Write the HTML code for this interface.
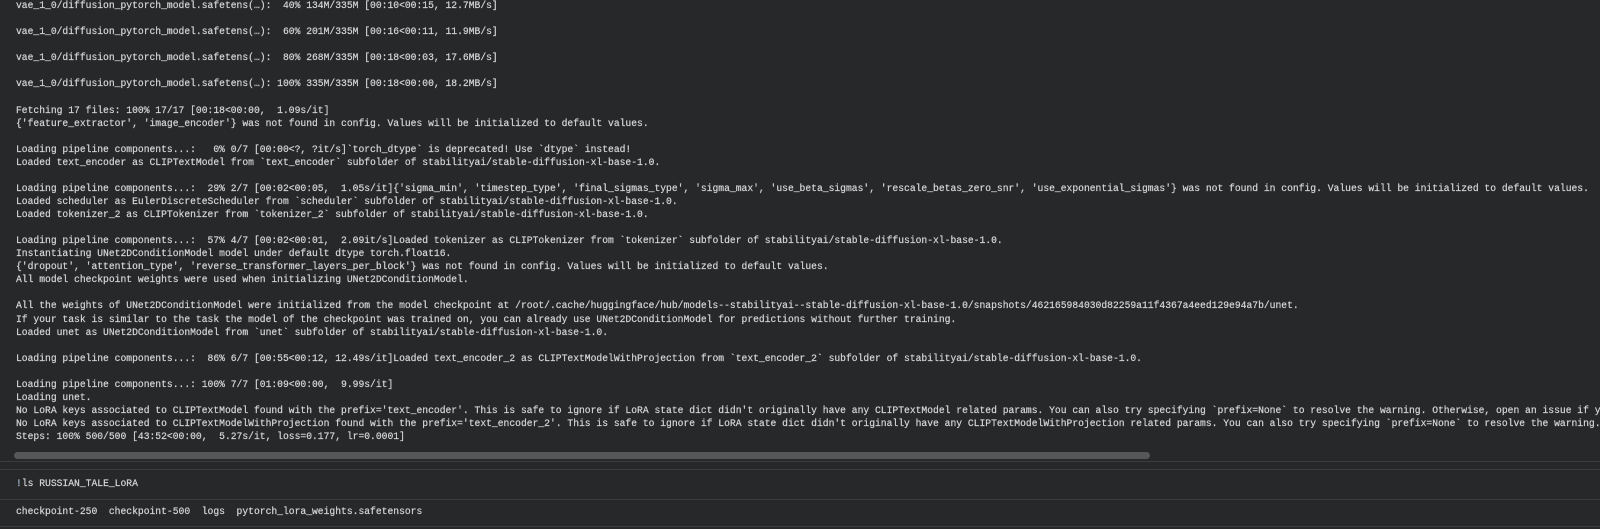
<!DOCTYPE html>
<html><head><style>
html,body{margin:0;padding:0;background:#27282a;width:1600px;height:529px;overflow:hidden}
pre{margin:0;font-family:"Liberation Mono","DejaVu Sans Mono",monospace;font-size:9.68px;line-height:13.07px;color:#d6d6d6;white-space:pre;position:absolute;left:16px;width:1584px;overflow:hidden;-webkit-text-stroke:0.2px #d6d6d6}
.hr{position:absolute;left:0;width:1600px;height:1px;background:#3b3c3f}
</style></head><body>
<pre style="top:-1px">vae_1_0/diffusion_pytorch_model.safetens(…):  40% 134M/335M [00:10&lt;00:15, 12.7MB/s]

vae_1_0/diffusion_pytorch_model.safetens(…):  60% 201M/335M [00:16&lt;00:11, 11.9MB/s]

vae_1_0/diffusion_pytorch_model.safetens(…):  80% 268M/335M [00:18&lt;00:03, 17.6MB/s]

vae_1_0/diffusion_pytorch_model.safetens(…): 100% 335M/335M [00:18&lt;00:00, 18.2MB/s]

Fetching 17 files: 100% 17/17 [00:18&lt;00:00,  1.09s/it]
{'feature_extractor', 'image_encoder'} was not found in config. Values will be initialized to default values.

Loading pipeline components...:   0% 0/7 [00:00&lt;?, ?it/s]`torch_dtype` is deprecated! Use `dtype` instead!
Loaded text_encoder as CLIPTextModel from `text_encoder` subfolder of stabilityai/stable-diffusion-xl-base-1.0.

Loading pipeline components...:  29% 2/7 [00:02&lt;00:05,  1.05s/it]{'sigma_min', 'timestep_type', 'final_sigmas_type', 'sigma_max', 'use_beta_sigmas', 'rescale_betas_zero_snr', 'use_exponential_sigmas'} was not found in config. Values will be initialized to default values.
Loaded scheduler as EulerDiscreteScheduler from `scheduler` subfolder of stabilityai/stable-diffusion-xl-base-1.0.
Loaded tokenizer_2 as CLIPTokenizer from `tokenizer_2` subfolder of stabilityai/stable-diffusion-xl-base-1.0.

Loading pipeline components...:  57% 4/7 [00:02&lt;00:01,  2.09it/s]Loaded tokenizer as CLIPTokenizer from `tokenizer` subfolder of stabilityai/stable-diffusion-xl-base-1.0.
Instantiating UNet2DConditionModel model under default dtype torch.float16.
{'dropout', 'attention_type', 'reverse_transformer_layers_per_block'} was not found in config. Values will be initialized to default values.
All model checkpoint weights were used when initializing UNet2DConditionModel.

All the weights of UNet2DConditionModel were initialized from the model checkpoint at /root/.cache/huggingface/hub/models--stabilityai--stable-diffusion-xl-base-1.0/snapshots/462165984030d82259a11f4367a4eed129e94a7b/unet.
If your task is similar to the task the model of the checkpoint was trained on, you can already use UNet2DConditionModel for predictions without further training.
Loaded unet as UNet2DConditionModel from `unet` subfolder of stabilityai/stable-diffusion-xl-base-1.0.

Loading pipeline components...:  86% 6/7 [00:55&lt;00:12, 12.49s/it]Loaded text_encoder_2 as CLIPTextModelWithProjection from `text_encoder_2` subfolder of stabilityai/stable-diffusion-xl-base-1.0.

Loading pipeline components...: 100% 7/7 [01:09&lt;00:00,  9.99s/it]
Loading unet.
No LoRA keys associated to CLIPTextModel found with the prefix='text_encoder'. This is safe to ignore if LoRA state dict didn't originally have any CLIPTextModel related params. You can also try specifying `prefix=None` to resolve the warning. Otherwise, open an issue if you think it's unexpected
No LoRA keys associated to CLIPTextModelWithProjection found with the prefix='text_encoder_2'. This is safe to ignore if LoRA state dict didn't originally have any CLIPTextModelWithProjection related params. You can also try specifying `prefix=None` to resolve the warning. Otherwise
Steps: 100% 500/500 [43:52&lt;00:00,  5.27s/it, loss=0.177, lr=0.0001]</pre>
<div style="position:absolute;left:14px;top:452px;width:1136px;height:7px;border-radius:4px;background:#565759"></div>
<div class="hr" style="top:461px"></div>
<div class="hr" style="top:469px"></div>
<pre style="top:476.5px"><span style="color:#8fb8e0">!</span>ls RUSSIAN_TALE_LoRA</pre>
<div class="hr" style="top:499px"></div>
<pre style="top:504.5px">checkpoint-250  checkpoint-500  logs  pytorch_lora_weights.safetensors</pre>
<div class="hr" style="top:526px"></div>
</body></html>
